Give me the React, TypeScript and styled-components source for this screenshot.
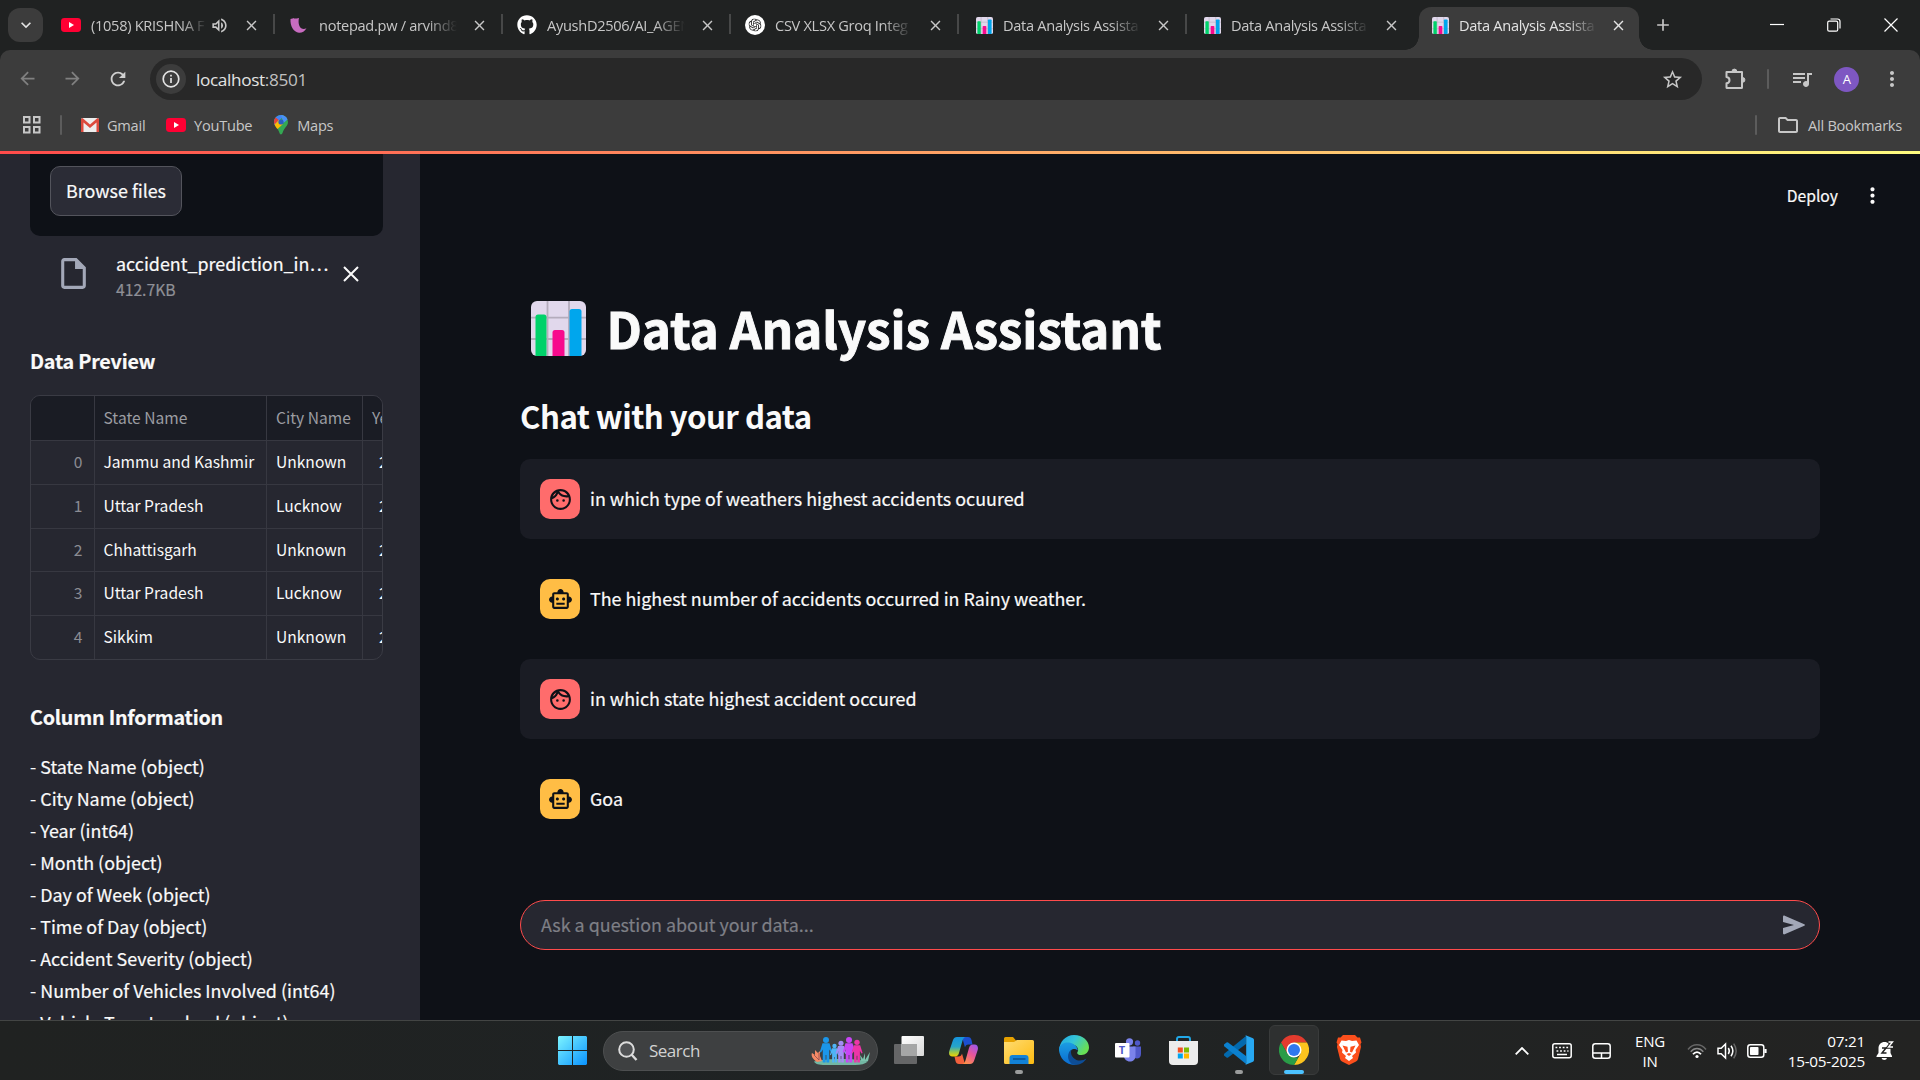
import React from 'react';
import styled, { createGlobalStyle, css } from 'styled-components';
import {
  MdArrowBack, MdArrowForward, MdRefresh, MdStarBorder, MdQueueMusic,
  MdOutlineFolder, MdMoreVert, MdAdd, MdClose, MdOutlineVolumeUp, MdOutlineFace,
  MdOutlineSmartToy, MdOutlineInsertDriveFile, MdExpandMore,
} from 'react-icons/md';
import { FaGithub } from 'react-icons/fa';
import { SiOpenai } from 'react-icons/si';

const source = '"Noto Sans CJK SC", "Noto Sans", sans-serif';
const system = '"Open Sans", "Noto Sans", sans-serif';

const GlobalStyle = createGlobalStyle`
  * { box-sizing: border-box; }
  html, body { margin: 0; background: #0e1117; overflow: hidden; }
  svg { display: block; flex: none; }
`;

/* ---------- window frame ---------- */
const Screen = styled.div`
  width: 1920px; height: 1080px; display: flex; flex-direction: column;
  overflow: hidden; background: #0e1117; color: #fafafa; font-family: ${source};
`;
const TabStrip = styled.header`
  height: 50px; flex: none; display: flex; background: #202222; font-family: ${system}; color: #c7c7c7;
`;
const TabSearch = styled.div`
  width: 35px; height: 34px; margin: 8px 4px 0 8px; border-radius: 12px; background: #3c3c3c;
  display: flex; align-items: center; justify-content: center; color: #e3e3e3;
`;
const TabItem = styled.div<{ $active?: boolean; $divider?: boolean }>`
  position: relative; width: 228px; height: 50px; flex: none; padding: 0 15px 0 13px;
  display: flex; align-items: center;
  ${p => p.$divider && css`&::after { content: ''; position: absolute; right: 0; top: 14px; width: 2px; height: 20px; background: #474848; }`}
  ${p => p.$active && css`
    width: 220px; margin: 7px 0 0 4px; height: 43px; padding: 0 12px 7px 9px; background: #3c3c3c; color: #e3e3e3;
    border-radius: 12px 12px 0 0;
    &::before, &::after { content: ''; position: absolute; bottom: 0; width: 14px; height: 14px; }
    &::before { left: -14px; background: radial-gradient(circle at 0 0, transparent 13.5px, #3c3c3c 14px); }
    &::after { right: -14px; background: radial-gradient(circle at 100% 0, transparent 13.5px, #3c3c3c 14px); }
  `}
`;
const Favicon = styled.span<{ $end?: boolean }>`
  width: 21px; height: 20px; flex: none; display: flex; align-items: center; color: #fff;
  justify-content: ${p => (p.$end ? 'flex-end' : 'center')};
`;
const TabTitle = styled.span<{ $short?: boolean }>`
  width: ${p => (p.$short ? 116 : 138)}px; margin-left: 10px; flex: none; overflow: hidden; white-space: nowrap;
  font-size: 14.6px; line-height: 22px; letter-spacing: -0.3px;
  mask-image: linear-gradient(90deg, #000 78%, transparent 100%);
`;
const TabSound = styled.span`margin-left: 3px; display: flex;`;
const TabClose = styled.span`margin-left: auto; display: flex;`;
const NewTab = styled.div`width: 48px; display: flex; align-items: center; justify-content: center;`;
const WindowButtons = styled.div`
  margin: 0 1px 0 auto; display: grid; grid-template-columns: repeat(3, 57px); align-items: center; justify-items: center;
  color: #fff;
`;

const Toolbar = styled.div`
  height: 58px; flex: none; background: #3c3c3c; border-radius: 10px 10px 0 0; display: flex; align-items: center;
  padding: 0 16px 0 17px; font-family: ${system}; color: #c7c7c7;
`;
const ToolbarBack = styled.div`background: #202222; flex: none;`;
const NavButtons = styled.div`width: 133px; display: grid; grid-template-columns: repeat(3, 45px);`;
const NavButton = styled.span<{ $on?: boolean }>`display: flex; color: ${p => (p.$on ? '#d0d0d0' : '#808080')};`;
const Omnibox = styled.div`
  width: 1552px; height: 42px; border-radius: 21px; background: #282828; display: flex; align-items: center;
  padding: 0 18px 0 6px;
`;
const SiteInfo = styled.span`
  width: 30px; height: 30px; border-radius: 50%; background: #3c3c3c; display: flex; align-items: center;
  justify-content: center; margin-right: 10px; color: #e3e3e3;
`;
const Url = styled.span`font-size: 17.2px; letter-spacing: -0.35px; color: #e3e3e3; flex: 1; & > i { font-style: normal; color: #c0c0c0; }`;
const Divider = styled.span`width: 2px; height: 20px; background: #5c5c5c; border-radius: 1px;`;
const ToolbarActions = styled.div`flex: 1; display: flex; align-items: center; justify-content: space-between; padding-left: 23px;`;
const Avatar = styled.span`
  width: 25px; height: 25px; border-radius: 50%; background: #7e57c2; color: #fff; font-size: 13px; line-height: 25px;
  text-align: center;
`;
const Bookmarks = styled.div`
  height: 43px; flex: none; background: #3c3c3c; display: flex; align-items: center; padding: 0 18px 10px 22px;
  font: 14.6px ${system}; letter-spacing: -0.25px; color: #c7c7c7;
`;
const Bookmark = styled.span<{ $w?: number }>`
  display: flex; align-items: center; gap: 8px; white-space: nowrap; width: ${p => (p.$w ? `${p.$w}px` : 'auto')};
`;
const AppsButton = styled.span`width: 38px; display: flex;`;
const BookmarkDivider = styled(Divider)`margin-right: 19px;`;
const EndDivider = styled(Divider)`margin: 0 19px 0 auto;`;
const RunningBar = styled.div`height: 3px; flex: none; background: linear-gradient(90deg, #ff4b4b, #fffd80);`;

/* ---------- page ---------- */
const Page = styled.div`height: 866px; flex: none; display: flex; overflow: hidden; -webkit-text-stroke: 0.2px currentColor;`;
const Sidebar = styled.aside`
  width: 420px; flex: none; background: #262730; padding: 0 37px 0 30px; overflow: hidden; display: flex;
  flex-direction: column;
`;
const Dropzone = styled.div`height: 82px; flex: none; padding: 12px 20px; background: #0e1117; border-radius: 0 0 10px 10px;`;
const BrowseButton = styled.button`
  width: 132px; height: 50px; padding: 0 0 2px; border: 1px solid #53545c; border-radius: 10px; background: #2b2c36; color: #fafafa;
  font: 17.9px/46px ${source}; white-space: nowrap;
`;
const FileRow = styled.div`height: 78px; flex: none; display: flex; padding: 17px 0 0 24.5px; color: #a3a8b8;`;
const FileIcon = styled.span`padding-top: 2px; display: flex;`;
const FileInfo = styled.div`width: 214px; margin: -7px 0 0 24.5px;`;
const FileName = styled.div`font-size: 17.9px; line-height: 34px; color: #fafafa; white-space: nowrap;`;
const FileSize = styled.div`font-size: 15.7px; line-height: 20px; color: #8f9097;`;
const RemoveFile = styled.span`margin: 13px 0 0 13px; color: #fafafa; display: flex; height: 16px;`;
const SideHeading = styled.h4<{ $top: number }>`
  margin: ${p => p.$top}px 0 0; height: 30px; flex: none; font-size: 19.7px; line-height: 30px; font-weight: 600;
  letter-spacing: -0.2px; white-space: nowrap;
`;
const Frame = styled.div`
  width: 353px; height: 265px; flex: none; margin-top: 19px; border: 1px solid #3a3b44; border-radius: 10px; overflow: hidden;
  -webkit-text-stroke: 0;
`;
const GridRow = styled.div<{ $head?: boolean }>`
  width: 420px; height: ${p => (p.$head ? 45 : 43.8)}px; display: grid; grid-template-columns: 63.5px 172.5px 96px 88px;
  border-bottom: 1px solid #373841; background: ${p => (p.$head ? '#1a1c24' : 'transparent')};
  color: ${p => (p.$head ? '#9c9da2' : '#fafafa')}; font-size: 15.6px; line-height: ${p => (p.$head ? 43 : 41.5)}px;
`;
const Cell = styled.span<{ $index?: boolean; $num?: boolean }>`
  border-right: 1px solid #373841; padding-left: ${p => (p.$num ? 16 : 9)}px; white-space: nowrap;
  ${p => p.$index && css`text-align: right; padding: 0 11px 0 0; color: #8b8c93;`}
`;
const ColumnList = styled.div`margin-top: 18px; font-size: 17.9px; line-height: 32px; white-space: nowrap;`;

const Main = styled.main`flex: 1; padding: 0 100px; display: flex; flex-direction: column;`;
const TopBar = styled.div`
  height: 82px; margin: 0 -65px 2px 0; display: flex; align-items: center; justify-content: flex-end; gap: 22px;
  font-size: 15.7px; flex: none;
`;
const PageTitle = styled.h1`
  margin: 50px 0 0; height: 80px; flex: none; display: flex; align-items: center; padding-left: 10.5px; gap: 21px;
  font-size: 49.6px; line-height: 76px; font-weight: 700; letter-spacing: -0.15px; white-space: nowrap;
  -webkit-text-stroke: 0.9px currentColor;
`;
const TitleText = styled.span`padding-bottom: 3px;`;
const SubTitle = styled.h3`
  margin: 27px 0 0; height: 42px; flex: none; font-size: 31.2px; line-height: 42px; font-weight: 600; letter-spacing: -0.52px;
  white-space: nowrap; -webkit-text-stroke: 0;
`;
const Thread = styled.div`margin-top: 22px; display: flex; flex-direction: column; gap: 20px;`;
const Message = styled.div<{ $user?: boolean }>`
  height: 80px; border-radius: 10px; padding: 20px; display: flex; align-items: center; gap: 10px; font-size: 17.9px;
  white-space: nowrap; background: ${p => (p.$user ? '#1a1c24' : 'transparent')};
`;
const MessageText = styled.span`padding-bottom: 2px;`;
const Face = styled.span<{ $user?: boolean }>`
  width: 40px; height: 40px; border-radius: 10px; display: flex; align-items: center; justify-content: center; color: #0e1117;
  background: ${p => (p.$user ? '#ff6c6c' : '#ffbd45')};
`;
const ChatInput = styled.div`
  height: 50px; flex: none; margin-top: 61px; border: 1px solid #ff4b4b; border-radius: 25px; background: #262730; padding: 0 13px 0 20px;
  display: flex; align-items: center; justify-content: space-between; font-size: 17.9px; color: #7e7f86;
`;

/* ---------- taskbar ---------- */
const Taskbar = styled.footer`
  height: 60px; flex: none; display: flex; align-items: center; background: linear-gradient(90deg, #202221, #1f2324 45%, #232322);
  border-top: 1px solid #434544; font-family: ${system}; color: #fff;
`;
const StartButton = styled.span`margin-left: 558px; width: 45px;`;
const SearchBox = styled.div`
  width: 275px; height: 40px; border-radius: 20px; background: #3e4041; border: 1px solid #4d4f50; display: flex;
  align-items: center; padding: 0 6px 0 14px; font-size: 17px; letter-spacing: -0.5px; color: #d2d2d2;
`;
const SearchLabel = styled.span`flex: 1; margin-left: 11px;`;
const Apps = styled.div`display: grid; grid-template-columns: repeat(9, 55px); margin: 0 0 1px 3px; height: 50px;`;
const AppButton = styled.span<{ $active?: boolean; $running?: boolean }>`
  position: relative; width: 50px; height: 50px; justify-self: center; border-radius: 6px; display: flex; align-items: center; justify-content: center;
  ${p => p.$active && css`background: #2e3030; border: 1px solid #393b3b;`}
  ${p => (p.$active || p.$running) && css`&::after {
    content: ''; position: absolute; bottom: ${p.$active ? 0 : 1}px; width: ${p.$active ? 20 : 8}px; height: 4px; border-radius: 2px;
    background: ${p.$active ? '#4cc2ff' : '#9a9c9c'};
  }`}
`;
const Tray = styled.div`margin-left: auto; padding-right: 26px; display: flex; align-items: center;`;
const TrayIcons = styled.div<{ $gap: number; $left?: number }>`
  display: flex; align-items: center; gap: ${p => p.$gap}px; margin-left: ${p => p.$left ?? 0}px;
`;
const Language = styled.div`width: 40px; margin: 0 17px 0 19px; text-align: center; font-size: 15px; line-height: 20px; letter-spacing: -0.2px;`;
const Clock = styled.div`width: 90px; margin: 0 11px 0 8px; text-align: right; font-size: 15.3px; line-height: 20px; letter-spacing: -0.25px; white-space: nowrap;`;

/* ---------- drawings ---------- */
const YouTubeLogo = () => (
  <svg width="20" height="14" viewBox="0 0 20 14"><rect width="20" height="14" rx="3.4" fill="#ff0033" /><path d="M8 4l5 3-5 3z" fill="#fff" /></svg>
);
const NotepadLogo = () => (
  <svg width="17" height="15" viewBox="0 0 17 15"><path d="M.5 1C3 .2 6 .8 9 0c-1 4-.2 8.500 2.200 10.300 1.600 1 3.600.8 5.300 0C14.500 13.500 12 15 9 14.800 3.500 14 0 8 .5 1z" fill="#c86cc0" /></svg>
);
const OpenAiLogo = () => (
  <svg width="20" height="20" viewBox="0 0 20 20"><circle cx="10" cy="10" r="10" fill="#fff" /><g transform="translate(3.500 3.500)" color="#222"><SiOpenai size={13} /></g></svg>
);
const ChartLogo = ({ size }: { size: number }) => (
  <svg width={size} height={size} viewBox="0 0 55 55">
    <rect width="55" height="55" rx="6" fill="#e1d8ec" />
    <path d="M0 16.700h55M0 38h55M16.500 0v55M38 0v55" stroke="#b4acbc" strokeWidth="1.800" />
    <path d="M4.500 55V16q0-2.500 2.500-2.500h6q2.500 0 2.500 2.500v39z" fill="#00d26a" />
    <path d="M21.500 55V31.500q0-2.500 2.500-2.500h7q2.500 0 2.500 2.500V55z" fill="#f70a8d" />
    <path d="M38.500 55V10.500Q38.500 8 41 8h7q2.500 0 2.500 2.500V55z" fill="#00a6ed" />
  </svg>
);
const GmailLogo = () => (
  <svg width="18" height="16" viewBox="0 0 18 16"><rect y="1" width="18" height="14" rx="1.500" fill="#eee" /><path d="M0 15V2l1.500-1L9 7.500 16.500 1 18 2v13h-2.500V5.500L9 11 2.500 5.500V15z" fill="#dd4b3e" /></svg>
);
const MapsLogo = () => (
  <svg width="14" height="20" viewBox="0 0 14 20">
    <path d="M7 0a7 7 0 0 1 7 7c0 4-4 6-5.300 10.500C8 20 6 20 5.500 18 4.500 13.500 0 11 0 7a7 7 0 0 1 7-7z" fill="#34a853" />
    <path d="M1 10.500L9.500 1 7 0a7 7 0 0 0-6 10.500z" fill="#4285f4" /><path d="M7 0c3 0 5.500 1.500 6.500 4.500L9.500 8z" fill="#4a90f5" />
    <path d="M1.700 2.500L4.800 5 .6 9.500C-.5 7 0 4.500 1.700 2.500z" fill="#ea4335" /><path d="M.6 9.500L5 5l4 4-5.500 5C2 12.500 1.200 11.200.6 9.500z" fill="#fbbc04" /><circle cx="7" cy="7" r="2.600" fill="#2b5fbf" />
  </svg>
);
const AppsGrid = () => (
  <svg width="19" height="19" viewBox="0 0 19 19" fill="none" stroke="#c7c7c7" strokeWidth="2"><path d="M2 2h5.500v5.500H2zM12 2h5.500v5.500H12zM2 12h5.500v5.500H2zM12 12h5.500v5.500H12z" /></svg>
);
const InfoIcon = () => (
  <svg width="18" height="18" viewBox="0 0 18 18" fill="none" stroke="currentColor" strokeWidth="1.700"><circle cx="9" cy="9" r="7.800" /><path d="M9 8v5M9 4.700v1.800" /></svg>
);
const ExtensionIcon = () => (
  <svg width="21" height="22" viewBox="0 0 21 22" fill="none" stroke="currentColor" strokeWidth="2" strokeLinejoin="round">
    <path d="M1.500 4h15.500v15.500q0 .500-.500.500H2q-.500 0-.500-.500V15.300q3-.4 3-3.100t-3-3.100z" /><path d="M7 3.500a2.400 2.400 0 0 1 4.800 0zM17.500 9.500a2.400 2.400 0 0 1 0 4.800z" fill="currentColor" strokeWidth="1" />
  </svg>
);
const SendIcon = () => (
  <svg width="24" height="20" viewBox="0 0 24 20"><path d="M1 1.700C1 .8 1.900.3 2.700.7l19.600 8.500c.8.300.8 1.300 0 1.600L2.700 19.300C1.900 19.700 1 19.200 1 18.300V13l11-3L1 7z" fill="#a3a8b8" /></svg>
);
const CrossIcon = () => (
  <svg width="16" height="16" viewBox="0 0 16 16" fill="none" stroke="currentColor" strokeWidth="2"><path d="M1 1l14 14M15 1L1 15" /></svg>
);
const WindowsLogo = () => (
  <svg width="29" height="29" viewBox="0 0 29 29">
    <defs><linearGradient id="win" gradientUnits="userSpaceOnUse" x1="0" y1="0" x2="29" y2="29"><stop stopColor="#7df4ff" /><stop offset="1" stopColor="#0a93ff" /></linearGradient></defs>
    <path d="M1 0h13v14H0V1zM15 0h13l1 1v13H15zM0 15h14v14H1l-1-1zM15 15h14v13l-1 1H15z" fill="url(#win)" />
  </svg>
);
const SearchIcon = () => (
  <svg width="20" height="20" viewBox="0 0 20 20" fill="none" stroke="#dcdcdc" strokeWidth="2"><circle cx="8.500" cy="8.500" r="7.300" fill="#505254" /><path d="M13.500 13.500L18.500 19" strokeWidth="2.400" /></svg>
);
const people = [
  { x: 15, s: 1.25, c: '#1b96ea' }, { x: 23.5, s: 0.92, c: '#4fb5f7' }, { x: 30, s: 1.07, c: '#a48cf5' },
  { x: 38, s: 1.25, c: '#c845f5' }, { x: 46, s: 1.12, c: '#ee35a8' },
];
const PeopleArt = () => (
  <svg width="60" height="30" viewBox="0 0 60 30">
    <path d="M3 25.500C15 22 45 22 57 25.500 54 28 50 29 44 29H14C8 29 4 28 3 25.500z" fill="#73b8a4" />
    <path d="M6 26C1 23 0 19 1 17l3 2 0-5 3 3 2-2 0 5 2 5z" fill="#f58a66" /><path d="M3 19l5 5M8 17v7" stroke="#8c4a50" strokeWidth=".8" />
    <path d="M50 25l-1-6 3 4 2-6 0 7 5-8-2 9z" fill="#7cc4ae" />
    {people.map(p => (
      <g key={p.x} fill={p.c} transform={`translate(${p.x} 26.500) scale(${p.s})`}>
        <circle cy="-18" r="2.400" /><path d="M-2.800-15.500h5.600L5-8.500 4-8 2.600-10.500V0H.3v-6h-.6v6h-2.300V-10.500L-4-8l-1-.5z" />
      </g>
    ))}
  </svg>
);
const TaskViewIcon = () => (
  <svg width="30" height="28" viewBox="0 0 30 28">
    <defs><linearGradient id="tv" x1="0" y1="0" x2="1" y2="1"><stop stopColor="#fff" /><stop offset="1" stopColor="#d8d8d8" /></linearGradient></defs>
    <rect y="8" width="23" height="20" rx="1" fill="#656667" /><rect x="7.500" width="22.500" height="20" rx="1" fill="url(#tv)" /><path d="M7.500 8H23v12H7.500z" fill="#a5a6a6" />
  </svg>
);
const CopilotIcon = () => (
  <svg width="29" height="27" viewBox="0 0 29 27">
    <defs>
      <linearGradient id="cp1" x1="0" y1="0" x2="0" y2="1"><stop stopColor="#1593dd" /><stop offset=".5" stopColor="#27a5c8" /><stop offset=".78" stopColor="#9bc84a" /><stop offset="1" stopColor="#f2d100" /></linearGradient>
      <linearGradient id="cp2" x1=".8" y1="0" x2=".2" y2="1"><stop stopColor="#a057e8" /><stop offset=".45" stopColor="#e8559a" /><stop offset="1" stopColor="#ff9446" /></linearGradient>
    </defs>
    <path d="M13 0h6c2 0 3 1 3.500 3l1 4.500h-4c-2 0-3 1-3.500 3z" fill="#1c4fd0" />
    <path d="M16 27h-6c-2 0-3-1-3.500-3l-1-4.500h4c2 0 3-1 3.500-3z" fill="#f2603d" />
    <path d="M8 0h9c-2 0-3 2-3.600 4L10 16c-.7 2-1.600 3.500-4 3.500H3.500C.5 19.500-.5 17 .3 14L4 3C4.800 1 6 0 8 0z" fill="url(#cp1)" />
    <path d="M21 27h-8c2 0 3-2 3.600-4L20 11c.7-2 1.600-3.500 4-3.500h1.500c3 0 4 2.500 3.200 5.500L25 24c-.8 2-2 3-4 3z" fill="url(#cp2)" />
  </svg>
);
const ExplorerIcon = () => (
  <svg width="30" height="27" viewBox="0 0 30 27">
    <defs><linearGradient id="fx" x1="0" y1="0" x2="1" y2="1"><stop stopColor="#ffdc73" /><stop offset="1" stopColor="#fdbb10" /></linearGradient></defs>
    <path d="M0 1.500Q0 0 1.500 0H9l3 3.500H28V9H0z" fill="#e6a100" /><path d="M0 5h10l3-2h15.500Q30 3 30 4.500V25.500Q30 27 28.500 27h-27Q0 27 0 25.500z" fill="url(#fx)" />
    <path d="M5.500 27v-6q0-3 3-3h13q3 0 3 3v6z" fill="#1282d8" /><path d="M9 22h12.500" stroke="#0a4f91" strokeWidth="1.500" />
  </svg>
);
const EdgeIcon = () => (
  <svg width="30" height="30" viewBox="0 0 30 30">
    <defs>
      <linearGradient id="e1" x1="0" y1="0" x2="1" y2=".5"><stop stopColor="#1da4e4" /><stop offset=".5" stopColor="#35c5d8" /><stop offset="1" stopColor="#68e055" /></linearGradient>
      <linearGradient id="e2" x1="0" y1="0" x2="0" y2="1"><stop stopColor="#1b9de2" /><stop offset="1" stopColor="#0a6bd0" /></linearGradient>
    </defs>
    <path d="M15 0c9 0 15 6 15 12.500C30 17 26.500 20 22.500 20c-3.500 0-5-1.500-4-3 2-3-1-7.500-6-7.500C6.500 9.500 1 13 .3 17.500-.8 8 6 0 15 0z" fill="url(#e1)" />
    <path d="M.2 13C1.500 8.500 7 6.500 12 8c4 1.200 7 5 6.700 7.500-2.500-3-8.200-1.500-8.700 4-.4 4.500 3 9.500 7 10.300C8 31-.8 23 .2 13z" fill="url(#e2)" />
    <path d="M12.500 14.500C10.500 20 15 25.500 21 25.500c2.500 0 4.500-.8 6.500-2-3 5-8 7-12.500 6.300C9 28.500 6.500 19 12.500 14.500z" fill="#0d4d96" />
  </svg>
);
const Letter = styled.text`font: 700 11px ${system};`;
const TeamsIcon = () => (
  <svg width="27" height="24" viewBox="0 0 27 24">
    <circle cx="22.500" cy="5" r="2.700" fill="#5059c9" /><path d="M18 8.500h8v7.500c0 3-2 4.500-4 4.500s-4-1-4-3z" fill="#5059c9" />
    <circle cx="14.500" cy="3.800" r="3.600" fill="#7b83eb" /><path d="M9 8.500h11.500v9c0 4-2.500 6-5.700 6S9 21 9 18z" fill="#7b83eb" />
    <rect y="5" width="14.500" height="14.500" rx="1" fill="#fff" /><Letter x="3.800" y="16" fill="#5059c9">T</Letter>
  </svg>
);
const StoreIcon = () => (
  <svg width="29" height="29" viewBox="0 0 29 29">
    <path d="M8 6V3q0-2 2-2h9q2 0 2 2v3" fill="none" stroke="#21a8e8" strokeWidth="1.900" /><path d="M0 5h29v20q0 4-4 4H4q-4 0-4-4z" fill="#ececec" />
    <path d="M8.800 11.500h5v5h-5z" fill="#f25022" /><path d="M15 11.500h5v5h-5z" fill="#7fba00" /><path d="M8.800 17.500h5v5h-5z" fill="#00a4ef" /><path d="M15 17.500h5v5h-5z" fill="#ffb900" />
  </svg>
);
const CodeIcon = () => (
  <svg width="30" height="30" viewBox="0 0 30 30">
    <path d="M0 20.500l2.500 2q.8.500 1.600 0L22 9V1L.5 18.500Q-.5 19.500 0 20.500z" fill="#0369ad" />
    <path d="M0 9.500L2.500 7.500q.8-.5 1.600 0L22 21v8L.5 11.500Q-.5 10.500 0 9.500z" fill="#0b80cf" />
    <path d="M21 0l8 3.200q1 .5 1 1.700v20.200q0 1.200-1 1.700L21 30q1.200-.5 1.200-2V2q0-1.500-1.200-2z" fill="#27a8f2" />
  </svg>
);
const ChromeIcon = () => (
  <svg width="30" height="30" viewBox="0 0 30 30">
    <path d="M2 7.500A15 15 0 0 1 28 7.500H15L8.500 18.800z" fill="#e33b2e" /><path d="M28 7.500A15 15 0 0 1 15 30l6.500-11.200L15 7.500z" fill="#fcc31e" />
    <path d="M15 30A15 15 0 0 1 2 7.500l6.500 11.300L15 22.500h4.400z" fill="#2a9c47" /><circle cx="15" cy="15" r="7.500" fill="#fff" /><circle cx="15" cy="15" r="6" fill="#2f78ee" />
  </svg>
);
const BraveIcon = () => (
  <svg width="26" height="30" viewBox="0 0 26 30">
    <path d="M7 0h12l2.500 2.500 2.500 0 1.500 5-1 1.500 .5 3-3 12q-.5 1.500-2 2.500L13 30l-7-3.500q-1.500-1-2-2.500L1 12l.5-3-1-1.500 1.500-5h2.500z" fill="#fb4f1c" />
    <path d="M5.500 5.500L10 6l3-1 3 1 4.500-.5L23 10l-3.500 5 .5 2.500-4 3.500 1 2-4 3-4-3 1-2-4-3.500.500-2.500L3 10z" fill="#fff" />
    <path d="M6.500 10.500l5 1.200.5 5-2 .8zM19.500 10.500l-5 1.200-.5 5 2 .8zM10.500 19l2.500-1 2.500 1-2.500 2z" fill="#fb4f1c" />
  </svg>
);
const line = { fill: 'none', stroke: '#fff', strokeWidth: 1.5 } as const;
const ChevronUp = () => <svg width="14" height="8" viewBox="0 0 14 8" {...line} strokeWidth="1.800"><path d="M.7 7.300L7 1l6.300 6.300" /></svg>;
const KeyboardIcon = () => (
  <svg width="20" height="16" viewBox="0 0 20 16" {...line}><rect x=".8" y=".8" width="18.400" height="14" rx="2" /><path d="M3.500 4.500h13M4.500 8h12" strokeWidth="1.700" strokeDasharray="1.800 1.800" /><path d="M5 11.500h10" /></svg>
);
const TouchpadIcon = () => <svg width="19" height="16" viewBox="0 0 19 16" {...line}><rect x=".8" y=".8" width="17.400" height="14.400" rx="2.500" /><path d="M1 10h17M9.500 10v5" /></svg>;
const WifiIcon = () => (
  <svg width="20" height="16" viewBox="0 0 20 16" {...line}><path d="M1 6.500C6 .3 14 .3 19 6.500" stroke="#666" /><path d="M3.700 8.800c3.800-4.300 8.800-4.300 12.600 0" stroke="#888" /><path d="M6 11.200c2.400-2.900 5.600-2.900 8 0" strokeWidth="1.800" /><circle cx="10" cy="13.500" r="1.600" fill="#fff" stroke="none" /></svg>
);
const VolumeIcon = () => (
  <svg width="20" height="18" viewBox="0 0 20 18" {...line}><path d="M1 6.300h3.200L8.500 2v14l-4.300-4.300H1z" /><path d="M11.300 6q2 3 0 6M14 3.800q3.700 5.200 0 10.400" /><path d="M16.700 1.700q5 7.300 0 14.600" stroke="#666" /></svg>
);
const BatteryIcon = () => (
  <svg width="20" height="14" viewBox="0 0 20 14" {...line}><rect x=".8" y=".8" width="16" height="12.400" rx="2.500" /><rect x="3" y="3" width="8.500" height="8" rx=".8" fill="#fff" stroke="none" /><path d="M18.500 5v4" strokeWidth="2.200" /></svg>
);
const BellIcon = () => (
  <svg width="18" height="20" viewBox="0 0 18 20">
    <path d="M2.500 7.500C2.500 3.500 5 1 8.500 1s6 2.500 6 6.500V12l1.500 3v1H.5v-1l2-3zM5.500 17h5.500q-.5 2-2.700 2T5.500 17z" fill="#fff" />
    <path d="M6 7h4l-4 5h4.500" fill="none" stroke="#222" strokeWidth="1.500" /><path d="M12.500 1h4l-4 5h4.500" fill="none" stroke="#222" strokeWidth="3.500" /><path d="M12.500 1h4l-4 5h4.500" fill="none" stroke="#fff" strokeWidth="1.400" />
  </svg>
);

/* ---------- data ---------- */
const tabs = [
  { icon: <YouTubeLogo />, title: '(1058) KRISHNA F', sound: true, divider: true },
  { icon: <NotepadLogo />, title: 'notepad.pw / arvind8', divider: true },
  { icon: <FaGithub size={20} />, title: 'AyushD2506/AI_AGEN', divider: true },
  { icon: <OpenAiLogo />, title: 'CSV XLSX Groq Integ', divider: true },
  { icon: <ChartLogo size={17} />, title: 'Data Analysis Assista', divider: true, chart: true },
  { icon: <ChartLogo size={17} />, title: 'Data Analysis Assista', chart: true },
  { icon: <ChartLogo size={17} />, title: 'Data Analysis Assista', active: true, chart: true },
];
const rows = [
  ['Jammu and Kashmir', 'Unknown'], ['Uttar Pradesh', 'Lucknow'], ['Chhattisgarh', 'Unknown'],
  ['Uttar Pradesh', 'Lucknow'], ['Sikkim', 'Unknown'],
];
const columns = [
  'State Name (object)', 'City Name (object)', 'Year (int64)', 'Month (object)', 'Day of Week (object)',
  'Time of Day (object)', 'Accident Severity (object)', 'Number of Vehicles Involved (int64)', 'Vehicle Type Involved (object)',
];
const messages = [
  { user: true, text: 'in which type of weathers highest accidents ocuured' },
  { user: false, text: 'The highest number of accidents occurred in Rainy weather.' },
  { user: true, text: 'in which state highest accident occured' },
  { user: false, text: 'Goa' },
];
const apps = [
  { icon: <TaskViewIcon /> }, { icon: <CopilotIcon /> }, { icon: <ExplorerIcon />, running: true }, { icon: <EdgeIcon /> },
  { icon: <TeamsIcon /> }, { icon: <StoreIcon /> }, { icon: <CodeIcon />, running: true }, { icon: <ChromeIcon />, active: true },
  { icon: <BraveIcon /> },
];

export default function App() {
  return (
    <Screen>
      <GlobalStyle />
      <TabStrip>
        <TabSearch><MdExpandMore size={20} /></TabSearch>
        {tabs.map((t, i) => (
          <TabItem key={i} $active={t.active} $divider={t.divider}>
            <Favicon $end={t.chart}>{t.icon}</Favicon>
            <TabTitle $short={t.sound}>{t.title}</TabTitle>
            {t.sound && <TabSound><MdOutlineVolumeUp size={19} /></TabSound>}
            <TabClose><MdClose size={17} /></TabClose>
          </TabItem>
        ))}
        <NewTab><MdAdd size={20} /></NewTab>
        <WindowButtons>
          <svg width="14" height="14" viewBox="0 0 14 14" {...line} strokeWidth="1.200"><path d="M0 6.500h14" /></svg>
          <svg width="14" height="14" viewBox="0 0 14 14" {...line} strokeWidth="1.200"><rect x=".7" y="3.200" width="10" height="10" rx="1.500" /><path d="M3.500 1h7q2.500 0 2.500 2.500v7" /></svg>
          <svg width="14" height="14" viewBox="0 0 14 14" {...line} strokeWidth="1.200"><path d="M.5.5l13 13M13.500.5l-13 13" /></svg>
        </WindowButtons>
      </TabStrip>
      <ToolbarBack>
        <Toolbar>
          <NavButtons>
            <NavButton><MdArrowBack size={21} /></NavButton>
            <NavButton><MdArrowForward size={21} /></NavButton>
            <NavButton $on><MdRefresh size={22} /></NavButton>
          </NavButtons>
          <Omnibox>
            <SiteInfo><InfoIcon /></SiteInfo>
            <Url>localhost<i>:8501</i></Url>
            <MdStarBorder size={23} />
          </Omnibox>
          <ToolbarActions>
            <ExtensionIcon />
            <Divider />
            <MdQueueMusic size={24} />
            <Avatar>A</Avatar>
            <MdMoreVert size={24} />
          </ToolbarActions>
        </Toolbar>
      </ToolbarBack>
      <Bookmarks>
        <AppsButton><AppsGrid /></AppsButton>
        <BookmarkDivider />
        <Bookmark $w={85}><GmailLogo />Gmail</Bookmark>
        <Bookmark $w={108}><YouTubeLogo />YouTube</Bookmark>
        <Bookmark><MapsLogo />&#8202;Maps</Bookmark>
        <EndDivider />
        <Bookmark><MdOutlineFolder size={24} />All Bookmarks</Bookmark>
      </Bookmarks>
      <RunningBar />
      <Page>
        <Sidebar>
          <Dropzone><BrowseButton>Browse files</BrowseButton></Dropzone>
          <FileRow>
            <FileIcon><MdOutlineInsertDriveFile size={37} /></FileIcon>
            <FileInfo>
              <FileName>accident_prediction_in…</FileName>
              <FileSize>412.7KB</FileSize>
            </FileInfo>
            <RemoveFile><CrossIcon /></RemoveFile>
          </FileRow>
          <SideHeading $top={32}>Data Preview</SideHeading>
          <Frame>
            <GridRow $head><Cell /><Cell>State Name</Cell><Cell>City Name</Cell><Cell>Year</Cell></GridRow>
            {rows.map(([state, city], i) => (
              <GridRow key={i}><Cell $index>{i}</Cell><Cell>{state}</Cell><Cell>{city}</Cell><Cell $num>2023</Cell></GridRow>
            ))}
          </Frame>
          <SideHeading $top={42}>Column Information</SideHeading>
          <ColumnList>{columns.map(c => <div key={c}>- {c}</div>)}</ColumnList>
        </Sidebar>
        <Main>
          <TopBar>Deploy<MdMoreVert size={25} /></TopBar>
          <PageTitle><ChartLogo size={55} /><TitleText>Data Analysis Assistant</TitleText></PageTitle>
          <SubTitle>Chat with your data</SubTitle>
          <Thread>
            {messages.map(m => (
              <Message key={m.text} $user={m.user}>
                <Face $user={m.user}>{m.user ? <MdOutlineFace size={25} /> : <MdOutlineSmartToy size={25} />}</Face>
                <MessageText>{m.text}</MessageText>
              </Message>
            ))}
          </Thread>
          <ChatInput><MessageText>Ask a question about your data...</MessageText><SendIcon /></ChatInput>
        </Main>
      </Page>
      <Taskbar>
        <StartButton><WindowsLogo /></StartButton>
        <SearchBox><SearchIcon /><SearchLabel>Search</SearchLabel><PeopleArt /></SearchBox>
        <Apps>
          {apps.map((a, i) => <AppButton key={i} $active={a.active} $running={a.running}>{a.icon}</AppButton>)}
        </Apps>
        <Tray>
          <ChevronUp />
          <TrayIcons $gap={20} $left={23}><KeyboardIcon /><TouchpadIcon /></TrayIcons>
          <Language>ENG<br />IN</Language>
          <TrayIcons $gap={10}><WifiIcon /><VolumeIcon /><BatteryIcon /></TrayIcons>
          <Clock>07:21<br />15-05-2025</Clock>
          <BellIcon />
        </Tray>
      </Taskbar>
    </Screen>
  );
}
